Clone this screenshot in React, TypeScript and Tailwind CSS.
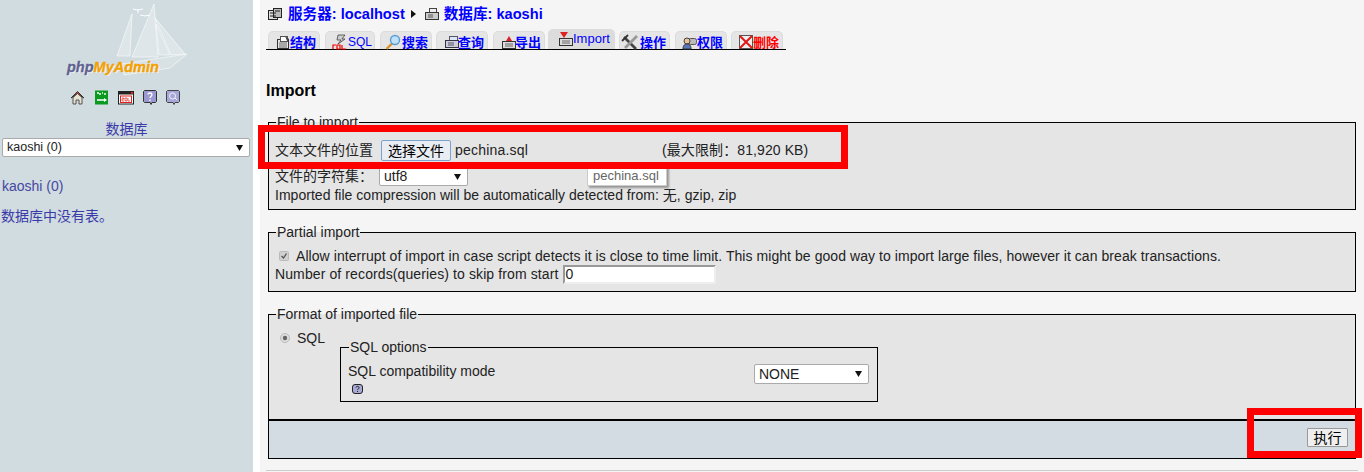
import React from "react";

const FONT = "font-['Liberation_Sans','Noto_Sans_CJK_SC',sans-serif]";

function Arrow() {
  return (
    <svg width="7" height="6" viewBox="0 0 7 6" className="shrink-0">
      <path d="M0 0h7L3.500 6z" fill="#111" />
    </svg>
  );
}

function Doc({ color = "#555" }: { color?: string }) {
  return (
    <>
      <rect x="2.500" y="5.500" width="11" height="9" fill="#e8e8e8" stroke="#333" />
      <rect x="5.500" y="2.500" width="7" height="5" fill="#fff" stroke={color} />
      <path d="M4 9h8M4 11h8M4 13h8" stroke="#666" />
    </>
  );
}

const S = ({ children }: { children: React.ReactNode }) => (
  <svg width="16" height="16" viewBox="0 0 16 16" className="shrink-0">{children}</svg>
);

function IconServer() {
  return (
    <S>
      <rect x="1.500" y="4.500" width="9" height="9" fill="#ddd" stroke="#222" />
      <rect x="6.500" y="2.500" width="8" height="9" fill="#bbb" stroke="#222" />
      <path d="M3 7h6M3 10h6M8 5h5" stroke="#222" />
    </S>
  );
}
function IconDb() {
  return (
    <S>
      <rect x="5.500" y="2.500" width="7" height="6" fill="#eee" stroke="#444" />
      <rect x="1.500" y="6.500" width="13" height="7" fill="#ccc" stroke="#333" />
      <path d="M4 9h5M4 11h5" stroke="#555" />
    </S>
  );
}
function IconStruct() {
  return <S><Doc /><path d="M10 2l4 3-2 2z" fill="#444" /></S>;
}
function IconSql() {
  return (
    <S>
      <path d="M6 1h7l-3 4h3L6 10l3-4H5z" fill="#ccc" stroke="#444" strokeWidth=".8" />
      <path d="M1 15v-4h3M5 15v-4h3v4zM10 11v4h4" stroke="#e00" strokeWidth="1.200" fill="none" />
    </S>
  );
}
function IconSearch() {
  return (
    <S>
      <path d="M1.500 15l6-6" stroke="#d9902f" strokeWidth="2.400" />
      <circle cx="10" cy="6" r="4.500" fill="#bfe0f7" stroke="#5c9bd1" strokeWidth="1.400" />
    </S>
  );
}
function IconQuery() {
  return (
    <S>
      <rect x="5.500" y="2.500" width="8" height="6" fill="#dde6f5" stroke="#556" />
      <rect x="1.500" y="6.500" width="13" height="7" fill="#ccd" stroke="#334" />
      <path d="M4 9h6M4 11h6" stroke="#556" />
    </S>
  );
}
function IconExport() {
  return (
    <S>
      <rect x="1.500" y="7.500" width="13" height="7" fill="#ddd" stroke="#333" />
      <path d="M4 10h8M4 12h8" stroke="#666" />
      <path d="M5 7l3-5 3 5z" fill="#d22" />
    </S>
  );
}
function IconImport() {
  return (
    <S>
      <rect x="1.500" y="7.500" width="13" height="7" fill="#ddd" stroke="#333" />
      <path d="M4 10h8M4 12h8" stroke="#666" />
      <path d="M2 1h8L6 7z" fill="#d22" />
    </S>
  );
}
function IconTools() {
  return (
    <svg width="18" height="17" viewBox="0 0 18 17" className="shrink-0">
      <path d="M3 3l12 12" stroke="#444" strokeWidth="2.600" />
      <path d="M16 2L4 14" stroke="#999" strokeWidth="2.800" />
      <path d="M1 7l6-6" stroke="#333" strokeWidth="1.800" />
    </svg>
  );
}
function IconPriv() {
  return (
    <S>
      <rect x="6.500" y="4.500" width="8" height="6" rx="2" fill="#bbb" stroke="#555" />
      <circle cx="5" cy="7" r="3" fill="#e9c29a" stroke="#444" />
      <path d="M1 15c0-4 2-5 4-5s4 1 4 5z" fill="#5a76b8" stroke="#333" />
    </S>
  );
}
function IconDrop() {
  return (
    <S>
      <rect x="1.500" y="1.500" width="13" height="13" fill="#eee" stroke="#555" />
      <path d="M2 2l12 12M14 2L2 14" stroke="#e01818" strokeWidth="2" />
    </S>
  );
}

const tabs = [
  { label: "结构", icon: <IconStruct />, box: "w-[52px] pl-[6px]", text: "-ml-[1px] font-bold text-[13px] text-[#0000ff]" },
  { label: "SQL", icon: <IconSql />, box: "ml-[5px] w-[50px] pl-[6px]", text: "text-[12px] text-[#0000ff]" },
  { label: "搜索", icon: <IconSearch />, box: "ml-[5px] w-[52px] pl-[4px]", text: "ml-[1px] font-bold text-[13px] text-[#0000ff]" },
  { label: "查询", icon: <IconQuery />, box: "ml-[4px] w-[52px] pl-[7px]", text: "-ml-[2px] font-bold text-[13px] text-[#0000ff]" },
  { label: "导出", icon: <IconExport />, box: "ml-[5px] w-[52px] pl-[7px]", text: "-ml-[2px] font-bold text-[13px] text-[#0000ff]" },
];
const tabsAfter = [
  { label: "操作", icon: <IconTools />, box: "ml-[4px] w-[51px] pl-[1px]", text: "ml-[1px] font-bold text-[13px] text-[#0000ff]" },
  { label: "权限", icon: <IconPriv />, box: "ml-[5px] w-[52px] pl-[6px]", text: "-ml-[1px] font-bold text-[13px] text-[#0000ff]" },
  { label: "删除", icon: <IconDrop />, box: "ml-[4px] w-[52px] pl-[6px]", text: "-ml-[1px] font-bold text-[13px] text-[#ff0000]" },
];

function Tab({ t }: { t: (typeof tabs)[number] }) {
  return (
    <div className={`${t.box} h-[18px] flex items-center rounded-t-[5px] bg-[#e5e5e5] border border-b-0 border-[#dcdcdc] leading-none`}>
      <span className="mt-[3px]">{t.icon}</span>
      <span className={`${t.text} mt-[3px]`}>{t.label}</span>
    </div>
  );
}

function Logo() {
  return (
    <div className="relative h-[80px] w-full">
      <svg width="253" height="80" viewBox="0 0 253 80" className="block">
        <g fill="#fff" fillOpacity=".3" stroke="#fff" strokeOpacity=".7" strokeWidth=".8">
          <path d="M154 4L132 57H158z" />
          <path d="M155 18L185 54 171 55z" />
          <path d="M156 24L170 55H159z" />
          <path d="M132 14L117 56H130z" />
          <path d="M122 64L187 54 170 68 124 75z" fillOpacity=".18" />
        </g>
        <path d="M133 9l5 1 5-1M138 10v3M140 15l5 1 5-1" stroke="#fff" fill="none" />
      </svg>
      <span className="absolute left-[67px] top-[58px] text-[14.5px] leading-[18px] font-bold italic [text-shadow:1px_1px_0_#f2f2f2] [-webkit-text-stroke:0.3px_currentColor]">
        <span className="text-[#5f6190]">php</span>
        <span className="text-[#f5a000]">MyAdmin</span>
      </span>
    </div>
  );
}

function NavIcons() {
  return (
    <div className="mt-[9px] flex pl-[70px] gap-[9px] h-[17px] items-center">
      <svg width="15" height="15" viewBox="0 0 15 15">
        <path d="M1 8l6.500-6.500L14 8 7.500 4z" fill="#c9432f" stroke="#333" />
        <path d="M3 7.500V14h3v-4h3v4h3V7.500L7.500 3.500z" fill="#e8e2d2" stroke="#333" strokeWidth=".8" />
      </svg>
      <svg width="14" height="15" viewBox="0 0 14 15" className="ml-[1px]">
        <rect width="13" height="14" y=".5" fill="#0a9a20" />
        <path d="M2 3h2M5 3v2M7 3h1M10 3v2M2 10h7" stroke="#fff" strokeWidth="1.400" />
        <path d="M9 8l3 2-3 2z" fill="#fff" />
      </svg>
      <svg width="16" height="14" viewBox="0 0 16 14">
        <rect x=".5" y=".5" width="15" height="12.500" fill="#fff" stroke="#222" />
        <rect x="1" y="1" width="14" height="2.500" fill="#222" />
        <path d="M13 1h2v2h-2z" fill="#d22" />
        <rect x="2.500" y="5" width="11" height="6.500" fill="#fff" stroke="#d22" />
        <path d="M4 7h2v1H4v2h2M7 7h2v3H7zM10 7v3h2" stroke="#d22" strokeWidth=".7" fill="none" />
      </svg>
      <svg width="14" height="15" viewBox="0 0 14 15">
        <path d="M1.500.5h11l1 1v10l-1 1H9l-1 2-1-2H1.500l-1-1v-10z" fill="#9a9ad0" stroke="#333" />
        <path d="M5 4.500c0-2 4-2 4 0S7 6.500 7 8M7 9.500v1.500" stroke="#fff" strokeWidth="1.300" fill="none" />
      </svg>
      <svg width="14" height="15" viewBox="0 0 14 15">
        <path d="M1.500.5h11l1 1v10l-1 1H9l-1 2-1-2H1.500l-1-1v-10z" fill="#a8a8d8" stroke="#444" />
        <circle cx="6.500" cy="6" r="3" fill="none" stroke="#eef" />
        <path d="M9 8l2 2" stroke="#eef" />
      </svg>
    </div>
  );
}

function Sidebar() {
  return (
    <aside className="w-[253px] shrink-0 bg-[#d0dce0]">
      <Logo />
      <NavIcons />
      <div className="mt-[15px] text-center text-[14px] leading-[16px] text-[#3a3aa8]">数据库</div>
      <div className="mx-[2px] mt-[1px] h-[19px] w-[248px] flex items-center justify-between bg-white border border-[#aaa] rounded-[2px] pl-[4px] pr-[6px] text-[12.5px] text-[#222]">
        <span>kaoshi (0)</span>
        <Arrow />
      </div>
      <div className="mt-[20px] pl-[2px] text-[14px] leading-[18px] text-[#4747a3]">kaoshi (0)</div>
      <div className="mt-[12px] pl-[1px] text-[14px] leading-[18px] text-[#3a3aa8]">数据库中没有表。</div>
    </aside>
  );
}

function Select({ label, cls }: { label: string; cls: string }) {
  return (
    <div className={`${cls} flex items-center justify-between bg-white border border-[#aaa] rounded-[2px] pl-[4px] pr-[6px] text-[14px] text-[#222]`}>
      <span>{label}</span>
      <Arrow />
    </div>
  );
}

function Main() {
  const legend = "ml-[1px] px-[1px] text-[14px] leading-[16px] text-[#222]";
  const fieldset = "block mx-[8px] border border-black bg-[#e5e5e5] px-[6px] text-[14px] text-[#222]";
  return (
    <main className="flex-1 min-w-0 ml-[7px] bg-[#f5f5f5] h-[472px] overflow-hidden">
      <div className="flex items-center h-[16px] mt-[6px] ml-[7px] text-[14.6px] font-bold text-[#0000ff] leading-none">
        <IconServer />
        <span className="ml-[5px]">服务器: localhost</span>
        <svg width="5" height="8" viewBox="0 0 5 8" className="ml-[6px]"><path d="M0 0l5 4-5 4z" fill="#111" /></svg>
        <span className="ml-[8px]"><IconDb /></span>
        <span className="ml-[4px]">数据库: kaoshi</span>
      </div>

      <div className="mt-[8px] ml-[6px] w-[520px] h-[20px] flex items-end border-b border-black pl-[2px]">
        {tabs.map((t) => <Tab key={t.label} t={t} />)}
        <div className="ml-[3px] w-[67px] h-[20px] flex items-center pl-[10px] rounded-t-[5px] bg-[#dcdcdc] text-[13px] text-[#0000ff] leading-none">
          <span className="-mt-[1px]"><IconImport /></span>
          <span className="-ml-[1px] -mt-[2px]">Import</span>
        </div>
        {tabsAfter.map((t) => <Tab key={t.label} t={t} />)}
      </div>

      <h2 className="mt-[32px] ml-[6px] text-[16px] leading-[18px] font-bold text-black">Import</h2>

      <form className="mt-[14px]">
        <fieldset className={`${fieldset} h-[96px]`}>
          <legend className={legend}>File to import</legend>
          <div className="flex items-center h-[21px] mt-[10px]">
            <span className="w-[106px]">文本文件的位置</span>
            <button type="button" className="w-[70px] h-[21px] bg-[#e8edf4] border border-[#7da2ce] rounded-[2px] text-[14px] text-black">选择文件</button>
            <span className="ml-[4px] w-[207px] tracking-[0.2px]">pechina.sql</span>
            <span className="tracking-[0.1px]">(最大限制：81,920 KB)</span>
          </div>
          <div className="flex items-center h-[19px] mt-[6px]">
            <span className="w-[104px]">文件的字符集：</span>
            <Select label="utf8" cls="w-[89px] h-[19px]" />
          </div>
          <div className="leading-[18px] tracking-[0.03px]">Imported file compression will be automatically detected from: 无, gzip, zip</div>
        </fieldset>

        <fieldset className={`${fieldset} h-[68px] mt-[14px]`}>
          <legend className={legend}>Partial import</legend>
          <div className="flex items-center h-[18px] mt-[7px] pl-[4px]">
            <svg width="10" height="10" viewBox="0 0 10 10" className="shrink-0">
              <rect x=".5" y=".5" width="9" height="9" rx="1" fill="#d0d0d0" stroke="#bbb" />
              <path d="M2.500 5l2 2 3-4.500" stroke="#555" strokeWidth="1.300" fill="none" />
            </svg>
            <span className="ml-[7px] tracking-[0.06px]">Allow interrupt of import in case script detects it is close to time limit. This might be good way to import large files, however it can break transactions.</span>
          </div>
          <div className="flex items-center h-[19px]">
            <span className="tracking-[0.11px]">Number of records(queries) to skip from start</span>
            <input readOnly value="0" className="ml-[5px] w-[153px] h-[19px] bg-white border-2 border-t-[#999] border-l-[#999] border-r-[#eee] border-b-[#eee] text-[14px] text-[#222] outline-none" />
          </div>
        </fieldset>

        <fieldset className={`${fieldset} h-[115px] mt-[14px] border-b-2`}>
          <legend className={legend}>Format of imported file</legend>
          <div className="flex items-start">
            <div className="flex items-center h-[18px] mt-[7px] pl-[5px] w-[65px]">
              <svg width="10" height="10" viewBox="0 0 10 10" className="shrink-0">
                <circle cx="5" cy="5" r="4.500" fill="#ddd" stroke="#bbb" />
                <circle cx="5" cy="5" r="2.200" fill="#666" />
              </svg>
              <span className="ml-[7px]">SQL</span>
            </div>
            <fieldset className="block w-[538px] h-[63px] mt-[17px] border border-black px-[7px]">
              <legend className="ml-[1px] px-[1px] text-[14px] leading-[16px]">SQL options</legend>
              <div className="flex items-start justify-between">
                <div className="mt-[8px]">
                  <div className="leading-[16px]">SQL compatibility mode</div>
                  <svg width="12" height="11" viewBox="0 0 12 11" className="ml-[4px] mt-[5px] block">
                    <rect x=".5" y=".5" width="10" height="9" rx="2.500" fill="#a9a9d6" stroke="#222" />
                    <path d="M4 3.500c0-1.500 3-1.500 3 0S5.500 5 5.500 6M5.500 7v1" stroke="#222" fill="none" />
                  </svg>
                </div>
                <Select label="NONE" cls="w-[115px] h-[20px] mt-[9px] mr-[1px]" />
              </div>
            </fieldset>
          </div>
        </fieldset>

        <fieldset className="block mx-[8px] h-[38px] border border-t-0 border-black bg-[#d3dce3] pl-[8px] pr-[7px]">
          <div className="flex justify-end pt-[7px]">
            <button type="button" className="w-[41px] h-[19px] bg-[#efefef] border border-[#999] rounded-[1px] text-[14px] leading-none text-black">执行</button>
          </div>
        </fieldset>
      </form>
      <div className="mt-[11px] mx-[6px] h-px bg-[#ccc]" />
    </main>
  );
}

export default function App() {
  return (
    <div className={`${FONT} relative w-[1364px] h-[472px] overflow-hidden flex bg-white`}>
      <Sidebar />
      <Main />
      <div className="absolute left-[587px] top-[166px] w-[80px] h-[20px] bg-white border border-[#ccc] shadow-[2px_2px_2px_rgba(0,0,0,0.35)] text-[13px] leading-[17px] pl-[5px] text-[#666]">pechina.sql</div>
      <div className="absolute left-[258px] top-[125px] w-[590px] h-[44px] border-[7px] border-[#ff0000]" />
      <div className="absolute left-[1247px] top-[408px] w-[115px] h-[50px] border-[7px] border-[#ff0000]" />
    </div>
  );
}
